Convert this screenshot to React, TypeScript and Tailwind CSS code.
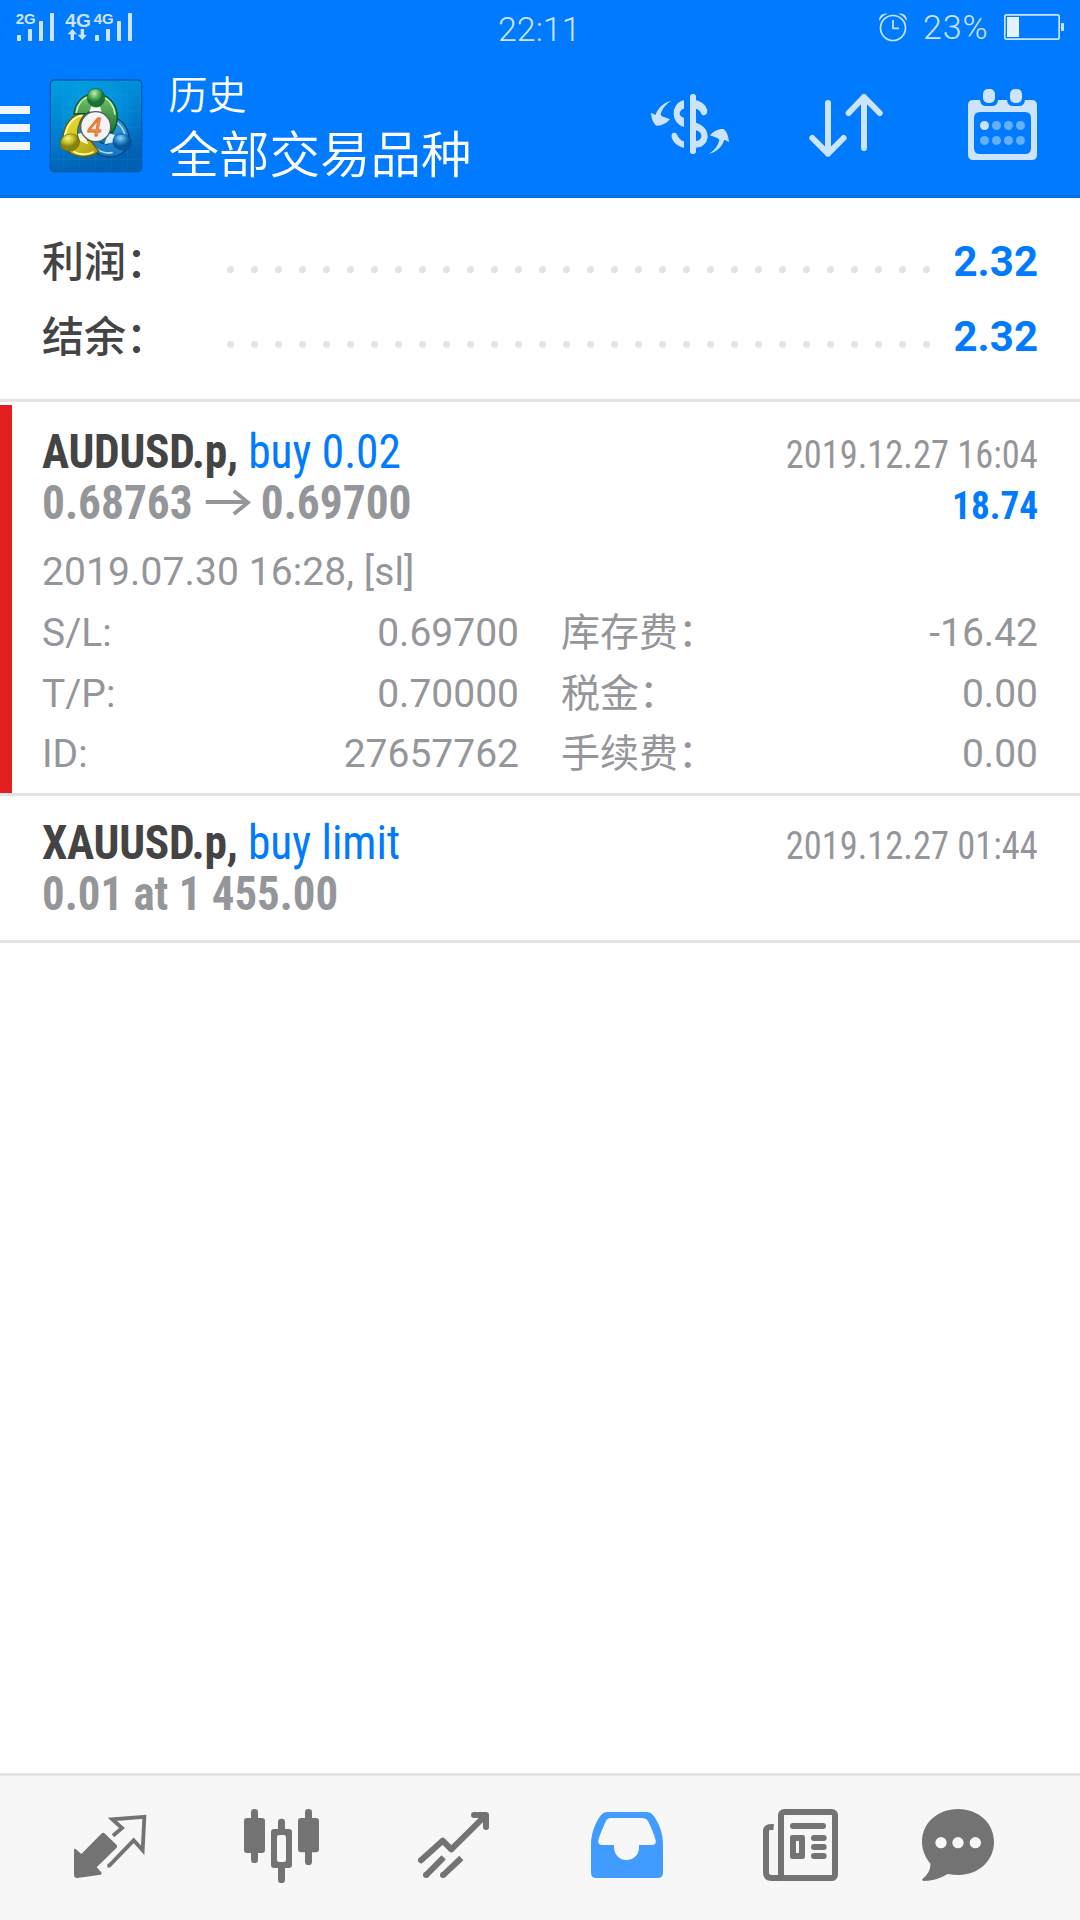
import React from "react";

const SANS = "font-['Roboto','Noto_Sans_CJK_SC',sans-serif]";
const COND = "font-['Roboto_Condensed','Roboto','Noto_Sans_CJK_SC',sans-serif]";

function StatusBar() {
  return (
    <div className="relative flex h-14 items-start justify-between">
      <svg className="h-14 w-[150px]" viewBox="0 0 450 168" fill="#cce4ff" fontFamily="Liberation Sans" fontWeight="700">
        <text x="47" y="71" fontSize="44" textLength="60" lengthAdjust="spacingAndGlyphs">2G</text>
        <rect x="51" y="105" width="12" height="18" rx="2" />
        <rect x="84" y="87" width="12" height="36" rx="2" />
        <rect x="117" y="63" width="12" height="60" rx="2" />
        <rect x="150" y="39" width="12" height="84" rx="2" />
        <text x="196" y="81" fontSize="57" textLength="77" lengthAdjust="spacingAndGlyphs">4G</text>
        <path d="M217 87l14 16h-9v17h-10v-17h-9zM247 120l-14-16h9V87h10v17h9z" />
        <text x="281" y="71" fontSize="44" textLength="60" lengthAdjust="spacingAndGlyphs">4G</text>
        <rect x="285" y="105" width="12" height="18" rx="2" />
        <rect x="318" y="87" width="12" height="36" rx="2" />
        <rect x="351" y="63" width="12" height="60" rx="2" />
        <rect x="384" y="39" width="12" height="84" rx="2" />
      </svg>
      <span className="absolute left-[498px] top-[9px] text-[34px] font-[350] leading-10 text-[#cce4ff]">22:11</span>
      <div className="flex">
        <svg className="h-14 w-[46px]" viewBox="765 0 138 168" fill="none" stroke="#cce4ff" strokeWidth="5">
          <circle cx="819" cy="84" r="37.500" />
          <path d="M819 60v25h18" />
          <path d="M778 63c-3-13 9-25 24-22-10 4-18 11-24 22zM860 63c3-13-9-25-24-22 10 4 18 11 24 22z" fill="#cce4ff" stroke="none" />
        </svg>
        <span className="mt-[7px] w-[77px] pl-0.5 text-[34px] font-[350] leading-10 tracking-[0.9px] text-[#cce4ff]">23%</span>
        <svg className="h-14 w-[82px]" viewBox="1134 0 246 168" fill="#cce4ff">
          <rect x="1154.500" y="44.500" width="163" height="73" rx="5" fill="none" stroke="#cce4ff" strokeWidth="5" />
          <rect x="1161" y="51" width="36" height="60" fill="#e6f2ff" />
          <rect x="1323" y="69" width="9" height="24" rx="2" />
        </svg>
      </div>
    </div>
  );
}

function Logo() {
  return (
    <svg className="mt-[23px] h-[94px] w-[94px]" viewBox="147 237 282 282">
      <defs>
        <linearGradient id="lg-bg" x1="0" y1="0" x2="0.300" y2="1">
          <stop offset="0" stopColor="#009fe3" />
          <stop offset="0.500" stopColor="#0083d2" />
          <stop offset="1" stopColor="#0060b4" />
        </linearGradient>
        <radialGradient id="lg-glow">
          <stop offset="0" stopColor="#10aeea" />
          <stop offset="1" stopColor="#10aeea" stopOpacity="0" />
        </radialGradient>
        <linearGradient id="lg-green" x1="0" y1="0" x2="0" y2="1">
          <stop offset="0" stopColor="#7cc66b" />
          <stop offset="1" stopColor="#15712f" />
        </linearGradient>
        <linearGradient id="lg-yellow" x1="0" y1="0" x2="1" y2="1">
          <stop offset="0" stopColor="#f5e835" />
          <stop offset="1" stopColor="#a99b0c" />
        </linearGradient>
        <linearGradient id="lg-blue" x1="0" y1="0" x2="0" y2="1">
          <stop offset="0" stopColor="#2d9bdd" />
          <stop offset="1" stopColor="#1674bf" />
        </linearGradient>
        <radialGradient id="lg-gb" cx="0.400" cy="0.250">
          <stop offset="0" stopColor="#c2f0b8" />
          <stop offset="0.600" stopColor="#4fa955" />
          <stop offset="1" stopColor="#1b7034" />
        </radialGradient>
        <radialGradient id="lg-yb" cx="0.400" cy="0.250">
          <stop offset="0" stopColor="#f8f58c" />
          <stop offset="0.600" stopColor="#c6bd20" />
          <stop offset="1" stopColor="#858010" />
        </radialGradient>
        <radialGradient id="lg-bb" cx="0.400" cy="0.250">
          <stop offset="0" stopColor="#8fd6f7" />
          <stop offset="0.600" stopColor="#2887cb" />
          <stop offset="1" stopColor="#08559f" />
        </radialGradient>
      </defs>
      <rect x="151" y="240" width="274" height="275" rx="12" fill="url(#lg-bg)" stroke="#0059ac" strokeWidth="4" />
      <circle cx="287" cy="345" r="120" fill="url(#lg-glow)" opacity="0.700" />
      <path d="M191 243v269M239 243v269M287 243v269M335 243v269M383 243v269M153 286h270M153 334h270M153 382h270M153 430h270M153 478h270" stroke="#48b8ee" strokeWidth="1.500" opacity="0.200" />
      <path d="M341 352c30 8 48 38 46 72-4 32-32 48-62 47-32-2-58-24-68-52l20-16c10 18 30 28 46 30 8-28 10-54 18-81z" fill="url(#lg-blue)" stroke="#03477f" strokeWidth="4" />
      <path d="M340 362c22 8 37 34 36 60M270 424c14 26 44 39 66 34" fill="none" stroke="#a4dafa" strokeWidth="5" strokeLinecap="round" />
      <path d="M254 340c-36-2-62 34-66 76 0 34 30 52 62 54 22 0 36-6 46-16l-26-34-34 4c-8-26-2-54 18-84z" fill="url(#lg-yellow)" stroke="#615d09" strokeWidth="4" />
      <path d="M246 347c-30 4-46 32-51 58M222 455c20 10 42 9 57 1" fill="none" stroke="#fffcb0" strokeWidth="5" strokeLinecap="round" />
      <path d="M222 342c2-28 22-54 48-58h34c30 8 48 38 48 66 0 18-6 36-16 50l-16-30-22-42h-20l-16 12z" fill="url(#lg-green)" stroke="#08512a" strokeWidth="4" />
      <path d="M229 337c3-22 17-40 35-47M311 292c19 8 32 28 34 50" fill="none" stroke="#c6efb9" strokeWidth="5" strokeLinecap="round" />
      <path d="M274 318h26l5 17h-37z" fill="#f8fbef" />
      <path d="M233 402l22-7 9 38-24-9z" fill="#fffbd2" />
      <path d="M344 405l-19-6-12 34 27-6z" fill="#d8f1ff" />
      <path d="M262 292c0-14 9-26 26-26 16 0 26 12 26 27 0 16-12 28-26 28s-26-12-26-29z" fill="url(#lg-gb)" stroke="#0c5a2d" strokeWidth="2" />
      <path d="M181 433c0-18 14-32 32-31 15 0 25 10 25 25-1 16-14 27-32 26-16 0-24-8-25-20z" fill="url(#lg-yb)" stroke="#6c690c" strokeWidth="2" />
      <path d="M339 424c0-13 10-22 24-22 18 0 31 12 31 28 0 12-10 20-25 20-18 0-30-10-30-26z" fill="url(#lg-bb)" stroke="#074889" strokeWidth="2" />
      <circle cx="287" cy="380" r="45" fill="#f4f4f6" stroke="#52605c" strokeWidth="4" />
      <text x="285" y="407" textAnchor="middle" fontFamily="DejaVu Sans" fontWeight="400" fontStyle="italic" fontSize="76" fill="#fb9a32" stroke="#d8622c" strokeWidth="2.500" textLength="46" lengthAdjust="spacingAndGlyphs">4</text>
    </svg>
  );
}

function Toolbar() {
  const arrow = "M156 303C136 304 112 324 107 345L93 338C94 355 100 370 109 377C125 378 140 370 150 358L134 352Q126 350 122 345C124 328 140 308 156 303z";
  return (
    <div className="flex h-[139px]">
      <div className="mt-[50px] flex w-[30px] flex-col gap-2.5">
        <div className="h-2 bg-[#f0f7ff]" />
        <div className="h-2 bg-[#f0f7ff]" />
        <div className="h-2 bg-[#f0f7ff]" />
      </div>
      <div className="ml-[19px]"><Logo /></div>
      <div className="ml-[25.5px] pt-[13px] text-white">
        <div className="text-[39px] font-[350] leading-[54px]">历史</div>
        <div className="text-[50.5px] font-[350] leading-[66px]">全部交易品种</div>
      </div>
      <div className="ml-auto flex pr-[35px]">
        <svg className="h-[139px] w-[90px]" viewBox="75 168 270 417" fill="#cce4ff">
          <rect x="210" y="282" width="18" height="180" rx="8" />
          <path d="M192 301C172 304 161 323 161 341C161 360 175 376 192 381V354C183 351 179 346 179 340C179 334 185 327 192 326z" />
          <path d="M155 411C152 400 162 395 170 401C176 414 181 421 192 424V443C173 440 159 428 155 411z" />
          <path d="M228 301C246 305 259 316 262 332C262 345 250 350 244 341C240 332 236 328 228 326z" />
          <path fillRule="evenodd" d="M228 368C250 376 263 389 263 408C263 429 248 442 228 443zM228 391V423C239 422 244 416 244 408C244 401 240 395 228 391z" />
          <path d={arrow} />
          <path d={arrow} transform="rotate(180 210 382)" />
        </svg>
        <svg className="ml-[65px] h-[139px] w-[90px]" viewBox="540 168 270 417" fill="none" stroke="#cce4ff" strokeWidth="18" strokeLinecap="round" strokeLinejoin="round">
          <path d="M624 309v152M577 414l47 47 47-47M732 444V291M686 339l46-48 47 48" />
        </svg>
        <svg className="ml-[70px] h-[139px] w-[85px]" viewBox="1020 168 255 417" fill="#cce4ff">
          <path fillRule="evenodd" d="M1060 300H1080Q1082 318 1098 318H1116Q1132 318 1134 300H1161Q1163 318 1179 318H1197Q1213 318 1215 300H1235Q1251 300 1251 316V464Q1251 480 1235 480H1060Q1044 480 1044 464V316Q1044 300 1060 300zM1080 336Q1062 336 1062 354V444Q1062 462 1080 462H1215Q1233 462 1233 444V354Q1233 336 1215 336z" />
          <rect x="1089" y="267" width="36" height="42" rx="15" />
          <rect x="1170" y="267" width="36" height="42" rx="15" />
          <circle cx="1093.500" cy="376.500" r="13.500" />
          <g fill="#66afff">
            <circle cx="1129.500" cy="376.500" r="13.500" />
            <circle cx="1165.500" cy="376.500" r="13.500" />
            <circle cx="1201.500" cy="376.500" r="13.500" />
            <circle cx="1093.500" cy="421.500" r="13.500" />
            <circle cx="1129.500" cy="421.500" r="13.500" />
            <circle cx="1165.500" cy="421.500" r="13.500" />
            <circle cx="1201.500" cy="421.500" r="13.500" />
          </g>
        </svg>
      </div>
    </div>
  );
}

function SummaryRow({ label, value }: { label: string; value: string }) {
  return (
    <div className="flex h-[75px] text-[42px] font-bold leading-[75px]">
      <span className="w-[184.5px] whitespace-nowrap font-medium leading-[77px] text-[#444444]">{label}</span>
      <div className="flex gap-[16.5px] pt-[41.5px]">
        {Array.from({ length: 30 }, (_, i) => (
          <span key={i} className="h-[7.5px] w-[7.5px] rounded-full bg-[#e4e4e4]" />
        ))}
      </div>
      <span className="ml-auto text-[#007aff]">{value}</span>
    </div>
  );
}

function Field({ label, value }: { label: string; value: string }) {
  return (
    <div className="flex justify-between">
      <span className="whitespace-nowrap">{label}</span>
      <span>{value}</span>
    </div>
  );
}

function DealHead({ symbol, kind, date }: { symbol: string; kind: string; date: string }) {
  return (
    <div className={`flex h-[51px] justify-between whitespace-nowrap leading-[51px] ${COND}`}>
      <div className="origin-left scale-x-[0.945] text-[48px] leading-[51px]">
        <span className="font-bold tracking-[-0.3px] text-[#444444]">{symbol},</span>{" "}
        <span className="text-[#007aff]">{kind}</span>
      </div>
      <span className="origin-right scale-x-[0.934] text-[39px] leading-[59px] text-[#95969a]">{date}</span>
    </div>
  );
}

function NavBar() {
  const box = "h-36 w-[120px]";
  return (
    <nav className="flex h-[147px] gap-[52px] border-t-[3px] border-[#e4e4e4] bg-[#f7f7f7] pl-[50px]">
      <svg className={box} viewBox="150 48 360 432" fill="#737373">
        <path d="M304 221Q309 216 315 221L350 255Q353 259 350 263L290 322L305 338Q306 342 302 344L232 354Q222 354 222 345V269Q223 265 227 267L244 282z" />
        <path d="M339 227L366 204L337 178L433 170.500L428 271L401 241L328 317H322" fill="none" stroke="#737373" strokeWidth="11.500" />
      </svg>
      <svg className={box} viewBox="666 48 360 432" fill="#737373">
        <rect x="753" y="147" width="21" height="162" rx="10" />
        <rect x="732" y="174" width="63" height="105" rx="9" />
        <rect x="915" y="147" width="21" height="168" rx="10" />
        <rect x="894" y="174" width="63" height="103" rx="9" />
        <rect x="834" y="176" width="21" height="40" rx="10" />
        <rect x="834" y="314" width="21" height="55" rx="10" />
        <path fillRule="evenodd" d="M822 207H867Q876 207 876 216V315Q876 324 867 324H822Q813 324 813 315V216Q813 207 822 207zM838 225Q831 225 831 232V299Q831 306 838 306H851Q858 306 858 299V232Q858 225 851 225z" />
      </svg>
      <svg className={box} viewBox="102 48 360 432" fill="none" stroke="#737373" strokeWidth="18" strokeLinejoin="round">
        <path strokeLinecap="round" d="M183 301L248 242L274 268L373 170M342 165H378V201" />
        <path d="M251 292L197 347M304 294L249 346" />
        <path d="M378 165l-14 14" />
        <circle cx="198" cy="345" r="9" fill="#737373" stroke="none" />
        <circle cx="249" cy="345" r="9" fill="#737373" stroke="none" />
      </svg>
      <svg className={box} viewBox="618 48 360 432" fill="#429bff">
        <path fillRule="evenodd" d="M741 156H861Q872 156 879 165C900 194 909 222 909 255V338Q909 354 893 354H709Q693 354 693 338V255C693 222 704 191 723 165Q731 156 741 156zM753 174Q742 174 738 183C730 201 719 224 715 241Q713 255 726 255H762V263C763 284 779 300 799 300C821 300 837 284 837 263V255H877Q890 254 887 241C883 224 873 201 865 185Q860 174 845 174z" />
      </svg>
      <svg className={box} viewBox="54 48 360 432" fill="none" stroke="#737373" strokeWidth="18">
        <rect x="183" y="156" width="162" height="198" rx="10" />
        <path d="M161 201Q138 199 138 213V337Q138 354 155 354H188" />
        <path d="M219 198H309M282 234H311M282 261H311M282 288H311" strokeLinecap="round" />
        <path fill="#737373" stroke="none" fillRule="evenodd" d="M217 225H248Q255 225 255 232V290Q255 297 248 297H217Q210 297 210 290V232Q210 225 217 225zM228 243V279H237V243z" />
      </svg>
      <svg className={box} viewBox="570 48 360 432" fill="#737373">
        <path fillRule="evenodd" d="M714 147C776 147 822 190 822 246C822 303 774 345 716 345Q699 345 683 342C661 356 636 363 612 363Q604 361 608 356C622 345 632 330 631 311C616 292 606 270 606 246C606 190 652 147 714 147zM663 231A17 17 0 1 0 663 265A17 17 0 1 0 663 231zM714 231A17 17 0 1 0 714 265A17 17 0 1 0 714 231zM766 231A17 17 0 1 0 766 265A17 17 0 1 0 766 231z" />
      </svg>
    </nav>
  );
}

export default function App() {
  return (
    <div className={`flex h-[1920px] w-[1080px] flex-col overflow-hidden bg-white ${SANS}`}>
      <header className="h-[198px] border-b-[3px] border-[#006ee6] bg-[#007aff]">
        <StatusBar />
        <Toolbar />
      </header>
      <section className="h-[204px] border-b-[3px] border-[#e4e4e4] px-[42px] pt-[26px]">
        <SummaryRow label="利润：" value="2.32" />
        <SummaryRow label="结余：" value="2.32" />
      </section>
      <div className="mt-[3px] flex h-[388px]">
        <div className="w-3 bg-[#e21e1e]" />
        <div className="flex-1 pl-[30px] pr-[42px] pt-[21px] text-[39px] text-[#95969a]">
          <DealHead symbol="AUDUSD.p" kind="buy 0.02" date="2019.12.27 16:04" />
          <div className={`flex h-[51px] justify-between font-bold ${COND}`}>
            <div className="flex origin-left scale-x-[0.945] text-[48px] leading-[51px]">
              <span>0.68763</span>
              <svg className="ml-[13px] mr-[11px] h-[51px] w-[48px]" viewBox="0 0 48 51" fill="none" stroke="#95969a" strokeWidth="4">
                <path d="M0 25h45M30 14l15 11.500L30 37" />
              </svg>
              <span>0.69700</span>
            </div>
            <span className="origin-right scale-x-[0.955] leading-[59px] text-[#007aff]">18.74</span>
          </div>
          <div className="mt-[14px] leading-[61px] tracking-[0.1px]">2019.07.30 16:28, [sl]</div>
          <div className="grid grid-cols-2 gap-x-[42px] leading-[60.5px]">
            <Field label="S/L:" value="0.69700" />
            <Field label="库存费：" value="-16.42" />
            <Field label="T/P:" value="0.70000" />
            <Field label="税金：" value="0.00" />
            <Field label="ID:" value="27657762" />
            <Field label="手续费：" value="0.00" />
          </div>
        </div>
      </div>
      <div className="h-[150px] border-y-[3px] border-[#e4e4e4] px-[42px] pt-[21px]">
        <DealHead symbol="XAUUSD.p" kind="buy limit" date="2019.12.27 01:44" />
        <div className={`origin-left scale-x-[0.935] text-[48px] font-bold leading-[51px] text-[#95969a] ${COND}`}>0.01 at 1 455.00</div>
      </div>
      <main className="flex-1" />
      <NavBar />
    </div>
  );
}
